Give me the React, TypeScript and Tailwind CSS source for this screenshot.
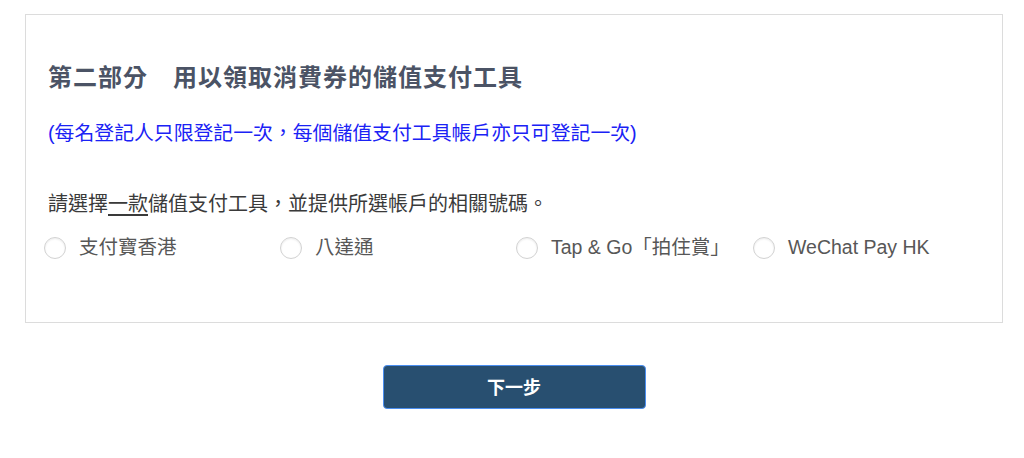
import React from "react";

const options = ["支付寶香港", "八達通", "Tap & Go「拍住賞」", "WeChat Pay HK"];

export default function App() {
  return (
    <div
      className="min-h-[458px] w-[1024px] bg-white pt-[14px]"
      style={{ fontFamily: '"Liberation Sans", "Noto Sans CJK TC", sans-serif' }}
    >
      <section className="ml-[25px] h-[309px] w-[978px] border border-[#dcdcdc] px-[22px] pt-[47px]">
        <h2 className="text-[24px] font-bold leading-[32px] tracking-[1px] text-[#4b5365]">
          第二部分　用以領取消費券的儲值支付工具
        </h2>
        <p className="mt-[25px] text-[19.85px] leading-[28px] text-[#1a22f5]">
          (每名登記人只限登記一次，每個儲值支付工具帳戶亦只可登記一次)
        </p>
        <p className="mt-[43px] text-[20px] leading-[28px] text-[#3a3a3a]">
          請選擇<span className="underline underline-offset-[3px]">一款</span>
          儲值支付工具，並提供所選帳戶的相關號碼。
        </p>
        <div className="-ml-[4px] mt-[16px] grid grid-cols-[236px_236px_237px_236px]">
          {options.map((label) => (
            <label key={label} className="flex h-[28px] items-center gap-[13px]">
              <span className="h-[22px] w-[22px] shrink-0 rounded-full border border-[#d2d2d2] bg-white shadow-[inset_0_1px_2px_rgba(0,0,0,0.08)]" />
              <span className="whitespace-nowrap text-[19.5px] text-[#575757]">{label}</span>
            </label>
          ))}
        </div>
      </section>
      <div className="ml-[25px] flex w-[978px] justify-center pt-[42px]">
        <button className="h-[44px] w-[263px] rounded-[4px] border-[1.5px] border-[#4a8ef0] bg-[#284f70] pt-[2px] text-[18px] font-bold text-white">
          下一步
        </button>
      </div>
    </div>
  );
}
